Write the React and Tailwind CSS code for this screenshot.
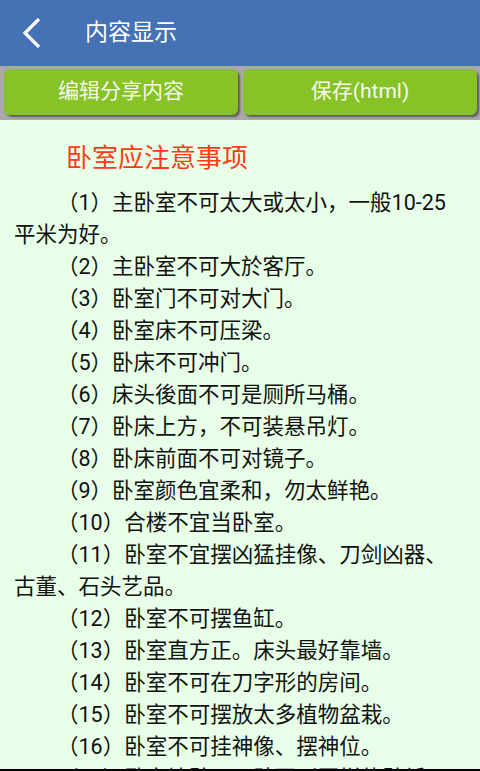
import React from "react";

const items = [
  "（1）主卧室不可太大或太小，一般10-25平米为好。",
  "（2）主卧室不可大於客厅。",
  "（3）卧室门不可对大门。",
  "（4）卧室床不可压梁。",
  "（5）卧床不可冲门。",
  "（6）床头後面不可是厕所马桶。",
  "（7）卧床上方，不可装悬吊灯。",
  "（8）卧床前面不可对镜子。",
  "（9）卧室颜色宜柔和，勿太鲜艳。",
  "（10）合楼不宜当卧室。",
  "（11）卧室不宜摆凶猛挂像、刀剑凶器、古董、石头艺品。",
  "（12）卧室不可摆鱼缸。",
  "（13）卧室直方正。床头最好靠墙。",
  "（14）卧室不可在刀字形的房间。",
  "（15）卧室不可摆放太多植物盆栽。",
  "（16）卧室不可挂神像、摆神位。",
  "（17）卧室墙壁不可贴圆形图样的壁纸。",
  "（18）卧室不宜放置过多电器。",
];

const font = { fontFamily: 'Roboto, "Noto Sans CJK SC", "Noto Sans", sans-serif' };

export default function App() {
  return (
    <div className="w-[480px] h-[771px] overflow-hidden flex flex-col bg-[#e8ffe8] relative" style={font}>
      {/* title bar */}
      <div className="h-[66px] shrink-0 bg-[#4571b5] flex items-center">
        <svg width="24" height="32" viewBox="0 0 24 32" className="ml-[20px] -mt-[2px]">
          <polyline points="19,3 5,17 19,31" fill="none" stroke="#fff" strokeWidth="3.2" />
        </svg>
        <span className="ml-[41px] -mt-[1px] text-[23px] text-white leading-none">内容显示</span>
      </div>

      {/* buttons */}
      <div className="h-[54px] shrink-0 bg-[#a9a9a9] flex gap-[5px] pl-[4px] pr-[3px] pt-[3px]">
        <button className="flex-1 h-[46px] rounded-[6px] bg-[#87c226] text-[21px] text-[#f4f9ee] shadow-[2px_2px_2px_rgba(60,60,60,0.7)]">
          编辑分享内容
        </button>
        <button className="flex-1 h-[46px] rounded-[6px] bg-[#87c226] text-[21px] text-[#f4f9ee] shadow-[2px_2px_2px_rgba(60,60,60,0.7)]">
          保存(html)
        </button>
      </div>

      {/* content */}
      <div className="flex-1 pl-[14px] pr-[26px] pt-[18px]">
        <h1 className="text-[26px] leading-[40px] text-[#ff3c14] indent-[2em] mb-[9px]">卧室应注意事项</h1>
        {items.map((t) => (
          <p key={t} className="text-[21.5px] leading-[32px] text-[#111] indent-[2em]">
            {t}
          </p>
        ))}
      </div>
      <div className="absolute left-0 right-0 bottom-0 h-[2px] bg-black" />
    </div>
  );
}
